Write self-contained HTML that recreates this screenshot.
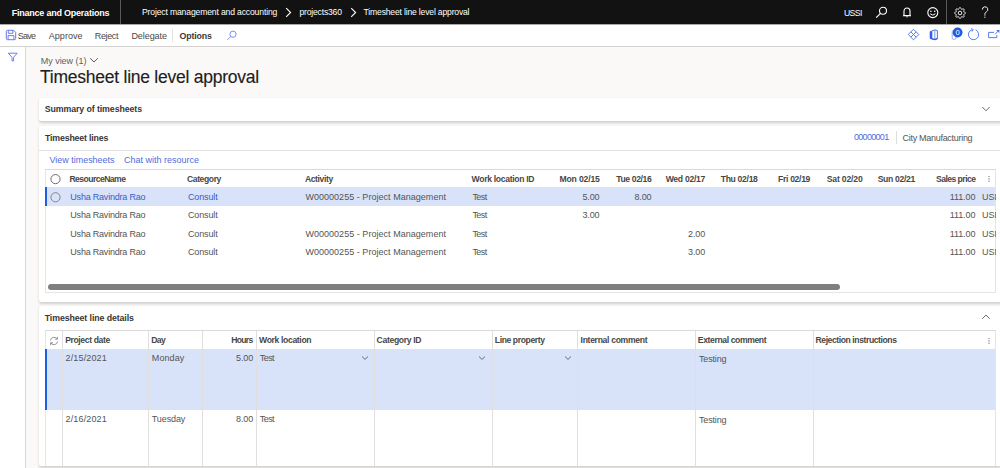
<!DOCTYPE html>
<html><head><meta charset="utf-8"><title>Timesheet line level approval</title>
<style>
*{margin:0;padding:0;box-sizing:border-box}
html,body{width:1000px;height:468px;overflow:hidden;background:#faf9f8;font-family:"Liberation Sans",sans-serif;position:relative}
.a{position:absolute}
.t{position:absolute;white-space:nowrap;line-height:20px;height:20px}
.link{color:#506ddd !important}
.selblue{color:#3b5cc8 !important}
.clipusd{width:13.5px;overflow:hidden}
.title{-webkit-text-stroke:0.15px #1f1e1d}
.r{font-size:9px;color:#555453;}
.tb{font-size:8.6px;color:#ffffff;}
.tb_b{font-size:9px;color:#ffffff;font-weight:bold;}
.tb_u{font-size:8.6px;color:#ffffff;}
.tbar{font-size:9px;color:#4a4948;}
.tbar_b{font-size:8.8px;color:#3a3938;font-weight:bold;}
.myview{font-size:9px;color:#605e5c;}
.title{font-size:17.5px;color:#1f1e1d;}
.sec{font-size:8.8px;color:#383736;font-weight:bold;}
.hd{font-size:8.6px;color:#484746;font-weight:bold;}
</style></head>
<body>
<!-- top bar -->
<div class="a" style="left:0;top:0;width:1000px;height:24px;background:#131212"></div>
<div class="a" style="left:0;top:24px;width:1000px;height:1px;background:#a8a8a8"></div>
<div class="a" style="left:120px;top:0;width:1px;height:24px;background:#5a5a5a"></div>
<div class="a" style="left:946px;top:0;width:1px;height:24px;background:#5a5a5a"></div>
<svg class="a" style="left:284px;top:7px" width="10" height="11" viewBox="0 0 10 11"><path d="M2.2 1.2 L6.6 5.5 L2.2 9.8" fill="none" stroke="#fff" stroke-width="1.1"/></svg>
<svg class="a" style="left:348.5px;top:7px" width="10" height="11" viewBox="0 0 10 11"><path d="M2.2 1.2 L6.6 5.5 L2.2 9.8" fill="none" stroke="#fff" stroke-width="1.1"/></svg>
<!-- top icons -->
<svg class="a" style="left:874px;top:6px" width="16" height="14" viewBox="0 0 16 14"><circle cx="9" cy="4.8" r="3.5" fill="none" stroke="#fff" stroke-width="1.1"/><path d="M6.5 7.4 L2.2 11.6" stroke="#fff" stroke-width="1.2"/></svg>
<svg class="a" style="left:901px;top:6px" width="12" height="13" viewBox="0 0 12 13"><path d="M3 9.5 V5.2 A3 3.2 0 0 1 9 5.2 V9.5 Z M2 9.8 H10" fill="none" stroke="#fff" stroke-width="1.1"/><path d="M4.8 10.6 A1.3 1.3 0 0 0 7.2 10.6" fill="#fff"/></svg>
<svg class="a" style="left:926px;top:5.5px" width="14" height="14" viewBox="0 0 14 14"><circle cx="6.8" cy="6.6" r="5" fill="none" stroke="#fff" stroke-width="1.1"/><circle cx="4.9" cy="5.3" r="0.8" fill="#fff"/><circle cx="8.7" cy="5.3" r="0.8" fill="#fff"/><path d="M4.2 7.8 Q6.8 10.4 9.4 7.8" fill="none" stroke="#fff" stroke-width="1"/></svg>
<svg class="a" style="left:952.5px;top:5.5px" width="14" height="14" viewBox="0 0 14 14"><path d="M12.55 7.00 L12.51 7.22 L12.38 7.42 L12.18 7.61 L11.94 7.78 L11.66 7.93 L11.38 8.05 L11.12 8.16 L10.90 8.27 L10.74 8.38 L10.65 8.51 L10.62 8.67 L10.66 8.86 L10.73 9.09 L10.84 9.35 L10.95 9.64 L11.04 9.94 L11.10 10.23 L11.10 10.51 L11.05 10.74 L10.92 10.92 L10.74 11.05 L10.51 11.10 L10.23 11.10 L9.94 11.04 L9.64 10.95 L9.35 10.84 L9.09 10.73 L8.86 10.66 L8.67 10.62 L8.51 10.65 L8.38 10.74 L8.27 10.90 L8.16 11.12 L8.05 11.38 L7.93 11.66 L7.78 11.94 L7.61 12.18 L7.42 12.38 L7.22 12.51 L7.00 12.55 L6.78 12.51 L6.58 12.38 L6.39 12.18 L6.22 11.94 L6.07 11.66 L5.95 11.38 L5.84 11.12 L5.73 10.90 L5.62 10.74 L5.49 10.65 L5.33 10.62 L5.14 10.66 L4.91 10.73 L4.65 10.84 L4.36 10.95 L4.06 11.04 L3.77 11.10 L3.49 11.10 L3.26 11.05 L3.08 10.92 L2.95 10.74 L2.90 10.51 L2.90 10.23 L2.96 9.94 L3.05 9.64 L3.16 9.35 L3.27 9.09 L3.34 8.86 L3.38 8.67 L3.35 8.51 L3.26 8.38 L3.10 8.27 L2.88 8.16 L2.62 8.05 L2.34 7.93 L2.06 7.78 L1.82 7.61 L1.62 7.42 L1.49 7.22 L1.45 7.00 L1.49 6.78 L1.62 6.58 L1.82 6.39 L2.06 6.22 L2.34 6.07 L2.62 5.95 L2.88 5.84 L3.10 5.73 L3.26 5.62 L3.35 5.49 L3.38 5.33 L3.34 5.14 L3.27 4.91 L3.16 4.65 L3.05 4.36 L2.96 4.06 L2.90 3.77 L2.90 3.49 L2.95 3.26 L3.08 3.08 L3.26 2.95 L3.49 2.90 L3.77 2.90 L4.06 2.96 L4.36 3.05 L4.65 3.16 L4.91 3.27 L5.14 3.34 L5.33 3.38 L5.49 3.35 L5.62 3.26 L5.73 3.10 L5.84 2.88 L5.95 2.62 L6.07 2.34 L6.22 2.06 L6.39 1.82 L6.58 1.62 L6.78 1.49 L7.00 1.45 L7.22 1.49 L7.42 1.62 L7.61 1.82 L7.78 2.06 L7.93 2.34 L8.05 2.62 L8.16 2.88 L8.27 3.10 L8.38 3.26 L8.51 3.35 L8.67 3.38 L8.86 3.34 L9.09 3.27 L9.35 3.16 L9.64 3.05 L9.94 2.96 L10.23 2.90 L10.51 2.90 L10.74 2.95 L10.92 3.08 L11.05 3.26 L11.10 3.49 L11.10 3.77 L11.04 4.06 L10.95 4.36 L10.84 4.65 L10.73 4.91 L10.66 5.14 L10.62 5.33 L10.65 5.49 L10.74 5.62 L10.90 5.73 L11.12 5.84 L11.38 5.95 L11.66 6.07 L11.94 6.22 L12.18 6.39 L12.38 6.58 L12.51 6.78 L12.55 7.00Z" fill="none" stroke="#fff" stroke-width="0.9"/><circle cx="7" cy="7" r="1.8" fill="none" stroke="#fff" stroke-width="0.9"/></svg>
<svg class="a" style="left:980px;top:6px" width="10" height="13" viewBox="0 0 10 13"><path d="M2.4 3.6 A2.7 2.7 0 1 1 6.3 5.9 C5.2 6.6 4.9 7.2 4.9 8.6 V9.6" fill="none" stroke="#fff" stroke-width="0.95"/><circle cx="4.9" cy="11.2" r="0.6" fill="#fff"/></svg>

<!-- toolbar -->
<div class="a" style="left:0;top:25px;width:1000px;height:22px;background:#fff;border-bottom:1px solid #d4d2d0"></div>
<svg class="a" style="left:5px;top:29px" width="12" height="12" viewBox="0 0 12 12"><path d="M2.6 1.3 H8.6 L10.7 3.4 V9.4 A1.3 1.3 0 0 1 9.4 10.7 H2.6 A1.3 1.3 0 0 1 1.3 9.4 V2.6 A1.3 1.3 0 0 1 2.6 1.3 Z" fill="none" stroke="#5b73e8" stroke-width="0.95"/><path d="M3.3 1.4 V4.3 H7.9 V1.4" fill="none" stroke="#5b73e8" stroke-width="0.9"/><path d="M3.1 10.6 V6.6 H8.9 V10.6" fill="none" stroke="#5b73e8" stroke-width="0.9"/></svg>
<div class="a" style="left:172px;top:29px;width:1px;height:13px;background:#e3e3e3"></div>
<svg class="a" style="left:226px;top:30px" width="12" height="11" viewBox="0 0 12 11"><circle cx="7" cy="4.2" r="3.1" fill="none" stroke="#6d82ee" stroke-width="0.9"/><path d="M4.8 6.4 L1.4 9.8" stroke="#6d82ee" stroke-width="0.9"/></svg>
<!-- toolbar right icons -->
<svg class="a" style="left:907px;top:28px" width="13" height="13" viewBox="0 0 13 13"><path d="M6.5 1.2 L11.8 6.5 L6.5 11.8 L1.2 6.5 Z" fill="none" stroke="#4a6ee8" stroke-width="0.9"/><path d="M3.9 3.9 L9.1 9.1 M9.1 3.9 L3.9 9.1" stroke="#4a6ee8" stroke-width="0.9"/></svg>
<svg class="a" style="left:929px;top:29px" width="10" height="12" viewBox="0 0 10 12"><path d="M1.3 2.6 L5.8 0.9 L8.4 1.6 V9.6 L5.8 10.6 L1.3 9.3 Z" fill="none" stroke="#3a63e6" stroke-width="0.9"/><path d="M0.9 2.6 V9.3 L3.3 8.9 V2.2 Z" fill="#2f5fe8"/><path d="M5.8 0.9 V10.6" stroke="#6f8cee" stroke-width="0.9"/><path d="M1.5 9.3 L5.8 10.6 L8.4 9.6" fill="none" stroke="#2f5fe8" stroke-width="1.3"/></svg>
<svg class="a" style="left:950px;top:27px" width="14" height="14" viewBox="0 0 14 14"><rect x="2.2" y="3.5" width="3.8" height="8.8" rx="1.2" fill="none" stroke="#8fa2ee" stroke-width="0.9"/><circle cx="7.6" cy="5.5" r="4.9" fill="#1f5be6"/><text x="7.6" y="8.4" font-family="Liberation Sans" font-size="7.6" text-anchor="middle" fill="#fff">0</text></svg>
<svg class="a" style="left:967px;top:28px" width="14" height="13" viewBox="0 0 14 13"><path d="M8.6 1.9 A5.1 5.1 0 1 1 5 1.7" fill="none" stroke="#4a6ee8" stroke-width="0.9"/><path d="M4.3 0.6 L6.3 1.6 L5 3.6" fill="none" stroke="#4a6ee8" stroke-width="0.9"/></svg>
<svg class="a" style="left:987px;top:28px" width="13" height="12" viewBox="0 0 13 12"><path d="M1.6 4.4 H7 M9.8 7.2 V9.6 H1.6 V4.4" fill="none" stroke="#4a6ee8" stroke-width="0.9"/><path d="M8 6.3 L11.3 3" stroke="#4a6ee8" stroke-width="0.9"/><path d="M9.2 1.9 L12.4 1.9 L12.4 5.1 Z" fill="#4a6ee8"/></svg>
<!-- left nav -->
<div class="a" style="left:0;top:47px;width:26px;height:421px;background:#fff;border-right:1px solid #d8d6d4"></div>
<svg class="a" style="left:7px;top:52px" width="12" height="10" viewBox="0 0 12 10"><path d="M1.3 1.2 H10.2 L6.6 5.3 V8.9 H5 V5.3 Z" fill="none" stroke="#5b73e8" stroke-width="0.9"/></svg>

<!-- page header chevron -->
<svg class="a" style="left:89px;top:57px" width="10" height="7" viewBox="0 0 10 7"><path d="M1.2 1.3 L5 5 L8.8 1.3" fill="none" stroke="#605e5c" stroke-width="1"/></svg>

<!-- card 1 -->
<div class="a" style="left:39px;top:98px;width:966px;height:23px;background:#fff;box-shadow:0 1.2px 2.5px rgba(0,0,0,.16);border-radius:2px"></div>
<svg class="a" style="left:980.5px;top:105px" width="10" height="8" viewBox="0 0 10 8"><path d="M1.3 2 L5 5.8 L8.7 2" fill="none" stroke="#605e5c" stroke-width="0.9"/></svg>

<!-- card 2 -->
<div class="a" style="left:39px;top:126px;width:966px;height:176px;background:#fff;box-shadow:0 1.2px 2.5px rgba(0,0,0,.16);border-radius:2px"></div>
<div class="a" style="left:39px;top:149.5px;width:961px;height:1.5px;background:#e3e2e0"></div>
<div class="a" style="left:896px;top:131px;width:1px;height:13px;background:#dedede"></div>
<!-- grid 1 -->
<div class="a" style="left:45px;top:169px;width:951px;height:124px;border:1px solid #e6e5e4;border-top:1px solid #dad9d8"></div>
<div class="a" style="left:46px;top:187px;width:949px;height:18.5px;background:#d8e3fa"></div>
<div class="a" style="left:45px;top:187px;width:2.2px;height:18.5px;background:#1e5fe0"></div>
<svg class="a" style="left:49px;top:172px" width="14" height="34" viewBox="0 0 14 34"><circle cx="6.5" cy="7.1" r="4.6" fill="none" stroke="#605e5c" stroke-width="0.9"/><circle cx="6.5" cy="25.3" r="4.6" fill="none" stroke="#7a7978" stroke-width="0.9"/></svg>
<svg class="a" style="left:987px;top:174px" width="4" height="10" viewBox="0 0 4 10"><circle cx="2" cy="2.6" r="0.65" fill="#6a6968"/><circle cx="2" cy="4.9" r="0.65" fill="#6a6968"/><circle cx="2" cy="7.2" r="0.65" fill="#6a6968"/></svg>
<div class="a" style="left:48px;top:283.8px;width:792px;height:6.5px;border-radius:3.3px;background:#7f7f7f"></div>

<!-- card 3 -->
<div class="a" style="left:39px;top:306px;width:966px;height:160px;background:#fff;box-shadow:0 1.2px 2.5px rgba(0,0,0,.16);border-radius:2px"></div>
<svg class="a" style="left:980.5px;top:313px" width="10" height="8" viewBox="0 0 10 8"><path d="M1.3 5.8 L5 2 L8.7 5.8" fill="none" stroke="#605e5c" stroke-width="0.9"/></svg>
<!-- grid 2 -->
<div class="a" style="left:45px;top:330px;width:951px;height:136px;border-left:1px solid #e6e5e4;border-right:1px solid #e6e5e4;border-top:1px solid #dad9d8"></div>
<div class="a" style="left:46px;top:349px;width:949px;height:61px;background:#d8e3fa"></div>
<div class="a" style="left:45px;top:349px;width:2.2px;height:61px;background:#1e5fe0"></div>
<div class="a" style="left:62.0px;top:331px;width:1px;height:135px;background:#e1dfdd"></div>
<div class="a" style="left:148.0px;top:331px;width:1px;height:135px;background:#e1dfdd"></div>
<div class="a" style="left:202.0px;top:331px;width:1px;height:135px;background:#e1dfdd"></div>
<div class="a" style="left:255.5px;top:331px;width:1px;height:135px;background:#e1dfdd"></div>
<div class="a" style="left:373.5px;top:331px;width:1px;height:135px;background:#e1dfdd"></div>
<div class="a" style="left:491.7px;top:331px;width:1px;height:135px;background:#e1dfdd"></div>
<div class="a" style="left:577.0px;top:331px;width:1px;height:135px;background:#e1dfdd"></div>
<div class="a" style="left:694.8px;top:331px;width:1px;height:135px;background:#e1dfdd"></div>
<div class="a" style="left:812.9px;top:331px;width:1px;height:135px;background:#e1dfdd"></div>
<svg class="a" style="left:360.8px;top:354.5px" width="8" height="6" viewBox="0 0 8 6"><path d="M1 1.5 L4 4.4 L7 1.5" fill="none" stroke="#605e5c" stroke-width="0.9"/></svg>
<svg class="a" style="left:478.3px;top:354.5px" width="8" height="6" viewBox="0 0 8 6"><path d="M1 1.5 L4 4.4 L7 1.5" fill="none" stroke="#605e5c" stroke-width="0.9"/></svg>
<svg class="a" style="left:564.3px;top:354.5px" width="8" height="6" viewBox="0 0 8 6"><path d="M1 1.5 L4 4.4 L7 1.5" fill="none" stroke="#605e5c" stroke-width="0.9"/></svg>

<svg class="a" style="left:48.5px;top:336px" width="10" height="10" viewBox="0 0 10 10"><path d="M1.3 4.6 A3.8 3.8 0 0 1 8.2 3" fill="none" stroke="#8a8988" stroke-width="0.9"/><path d="M8.7 5.4 A3.8 3.8 0 0 1 1.8 7" fill="none" stroke="#8a8988" stroke-width="0.9"/><path d="M8.4 0.8 V3.2 H6" fill="none" stroke="#8a8988" stroke-width="0.9"/><path d="M1.6 9.2 V6.8 H4" fill="none" stroke="#8a8988" stroke-width="0.9"/></svg>
<svg class="a" style="left:987px;top:335.5px" width="4" height="10" viewBox="0 0 4 10"><circle cx="2" cy="2.6" r="0.65" fill="#6a6968"/><circle cx="2" cy="4.9" r="0.65" fill="#6a6968"/><circle cx="2" cy="7.2" r="0.65" fill="#6a6968"/></svg>

<div class="t tb_b" style="top:3px;letter-spacing:-0.225px;left:11.70px;">Finance and Operations</div>
<div class="t tb" style="top:2px;letter-spacing:-0.146px;left:142.00px;">Project management and accounting</div>
<div class="t tb" style="top:2px;letter-spacing:-0.185px;left:299.40px;">projects360</div>
<div class="t tb" style="top:2px;letter-spacing:-0.180px;left:363.60px;">Timesheet line level approval</div>
<div class="t tb_u" style="top:3px;letter-spacing:-0.592px;left:844.00px;">USSI</div>
<div class="t tbar" style="top:26px;letter-spacing:-0.742px;left:17.70px;">Save</div>
<div class="t tbar" style="top:26px;letter-spacing:0.038px;left:48.75px;">Approve</div>
<div class="t tbar" style="top:26px;letter-spacing:-0.360px;left:94.80px;">Reject</div>
<div class="t tbar" style="top:26px;letter-spacing:-0.061px;left:131.40px;">Delegate</div>
<div class="t tbar_b" style="top:26px;letter-spacing:-0.108px;left:179.40px;">Options</div>
<div class="t myview" style="top:51px;letter-spacing:-0.040px;left:40.80px;">My view (1)</div>
<div class="t title" style="top:67px;letter-spacing:-0.243px;left:40.00px;">Timesheet line level approval</div>
<div class="t sec" style="top:99px;letter-spacing:-0.094px;left:44.70px;">Summary of timesheets</div>
<div class="t sec" style="top:128px;letter-spacing:-0.177px;left:45.00px;">Timesheet lines</div>
<div class="t r link" style="top:127px;letter-spacing:-0.693px;left:854.00px;">00000001</div>
<div class="t r" style="top:128px;letter-spacing:-0.296px;left:902.60px;">City Manufacturing</div>
<div class="t r link" style="top:150px;letter-spacing:-0.012px;left:49.40px;">View timesheets</div>
<div class="t r link" style="top:150px;letter-spacing:-0.001px;left:124.00px;">Chat with resource</div>
<div class="t hd" style="top:169px;letter-spacing:-0.548px;left:69.40px;">ResourceName</div>
<div class="t hd" style="top:169px;letter-spacing:-0.411px;left:187.00px;">Category</div>
<div class="t hd" style="top:169px;letter-spacing:-0.396px;left:304.90px;">Activity</div>
<div class="t hd" style="top:169px;letter-spacing:-0.313px;left:471.60px;">Work location ID</div>
<div class="t hd" style="top:169px;letter-spacing:-0.159px;right:400.36px;">Mon 02/15</div>
<div class="t hd" style="top:169px;letter-spacing:-0.369px;right:348.57px;">Tue 02/16</div>
<div class="t hd" style="top:169px;letter-spacing:-0.263px;right:294.86px;">Wed 02/17</div>
<div class="t hd" style="top:169px;letter-spacing:-0.309px;right:242.41px;">Thu 02/18</div>
<div class="t hd" style="top:169px;letter-spacing:-0.312px;right:189.91px;">Fri 02/19</div>
<div class="t hd" style="top:169px;letter-spacing:-0.162px;right:137.46px;">Sat 02/20</div>
<div class="t hd" style="top:169px;letter-spacing:-0.306px;right:85.01px;">Sun 02/21</div>
<div class="t hd" style="top:169px;letter-spacing:-0.542px;right:24.54px;">Sales price</div>
<div class="t r selblue" style="top:187px;letter-spacing:-0.209px;left:70.30px;">Usha Ravindra Rao</div>
<div class="t r selblue" style="top:187px;letter-spacing:-0.121px;left:187.90px;">Consult</div>
<div class="t r" style="top:187px;letter-spacing:0.035px;left:305.40px;">W00000255 - Project Management</div>
<div class="t r" style="top:187px;letter-spacing:-0.533px;left:472.40px;">Test</div>
<div class="t r" style="top:187px;letter-spacing:-0.108px;right:400.51px;">5.00</div>
<div class="t r" style="top:187px;letter-spacing:-0.108px;right:348.51px;">8.00</div>
<div class="t r" style="top:187px;letter-spacing:-0.100px;right:24.70px;">111.00</div>
<div class="t r clipusd" style="top:187px;letter-spacing:-0.050px;left:982.00px;">USD</div>
<div class="t r" style="top:205px;letter-spacing:-0.209px;left:70.30px;">Usha Ravindra Rao</div>
<div class="t r" style="top:205px;letter-spacing:-0.121px;left:187.90px;">Consult</div>
<div class="t r" style="top:205px;letter-spacing:-0.533px;left:472.40px;">Test</div>
<div class="t r" style="top:205px;letter-spacing:-0.108px;right:400.51px;">3.00</div>
<div class="t r" style="top:205px;letter-spacing:-0.100px;right:24.70px;">111.00</div>
<div class="t r clipusd" style="top:205px;letter-spacing:-0.050px;left:982.00px;">USD</div>
<div class="t r" style="top:224px;letter-spacing:-0.209px;left:70.30px;">Usha Ravindra Rao</div>
<div class="t r" style="top:224px;letter-spacing:-0.121px;left:187.90px;">Consult</div>
<div class="t r" style="top:224px;letter-spacing:0.035px;left:305.40px;">W00000255 - Project Management</div>
<div class="t r" style="top:224px;letter-spacing:-0.533px;left:472.40px;">Test</div>
<div class="t r" style="top:224px;letter-spacing:-0.108px;right:294.91px;">2.00</div>
<div class="t r" style="top:224px;letter-spacing:-0.100px;right:24.70px;">111.00</div>
<div class="t r clipusd" style="top:224px;letter-spacing:-0.050px;left:982.00px;">USD</div>
<div class="t r" style="top:242px;letter-spacing:-0.209px;left:70.30px;">Usha Ravindra Rao</div>
<div class="t r" style="top:242px;letter-spacing:-0.121px;left:187.90px;">Consult</div>
<div class="t r" style="top:242px;letter-spacing:0.035px;left:305.40px;">W00000255 - Project Management</div>
<div class="t r" style="top:242px;letter-spacing:-0.533px;left:472.40px;">Test</div>
<div class="t r" style="top:242px;letter-spacing:-0.108px;right:294.91px;">3.00</div>
<div class="t r" style="top:242px;letter-spacing:-0.100px;right:24.70px;">111.00</div>
<div class="t r clipusd" style="top:242px;letter-spacing:-0.050px;left:982.00px;">USD</div>
<div class="t sec" style="top:308px;letter-spacing:-0.095px;left:44.70px;">Timesheet line details</div>
<div class="t hd" style="top:330px;letter-spacing:-0.384px;left:65.20px;">Project date</div>
<div class="t hd" style="top:330px;letter-spacing:-0.638px;left:151.30px;">Day</div>
<div class="t hd" style="top:330px;letter-spacing:-0.688px;right:747.49px;">Hours</div>
<div class="t hd" style="top:330px;letter-spacing:-0.350px;left:259.10px;">Work location</div>
<div class="t hd" style="top:330px;letter-spacing:-0.327px;left:376.60px;">Category ID</div>
<div class="t hd" style="top:330px;letter-spacing:-0.396px;left:494.80px;">Line property</div>
<div class="t hd" style="top:330px;letter-spacing:-0.312px;left:580.60px;">Internal comment</div>
<div class="t hd" style="top:330px;letter-spacing:-0.383px;left:697.80px;">External comment</div>
<div class="t hd" style="top:330px;letter-spacing:-0.420px;left:815.50px;">Rejection instructions</div>
<div class="t r" style="top:348px;letter-spacing:0.156px;left:65.50px;">2/15/2021</div>
<div class="t r" style="top:348px;letter-spacing:0.095px;left:151.80px;">Monday</div>
<div class="t r" style="top:348px;letter-spacing:-0.108px;right:746.91px;">5.00</div>
<div class="t r" style="top:348px;letter-spacing:-0.533px;left:259.70px;">Test</div>
<div class="t r" style="top:349px;letter-spacing:-0.171px;left:699.00px;">Testing</div>
<div class="t r" style="top:409px;letter-spacing:0.156px;left:65.50px;">2/16/2021</div>
<div class="t r" style="top:409px;letter-spacing:-0.112px;left:151.80px;">Tuesday</div>
<div class="t r" style="top:409px;letter-spacing:-0.108px;right:746.91px;">8.00</div>
<div class="t r" style="top:409px;letter-spacing:-0.533px;left:259.70px;">Test</div>
<div class="t r" style="top:410px;letter-spacing:-0.171px;left:699.00px;">Testing</div>
</body></html>
